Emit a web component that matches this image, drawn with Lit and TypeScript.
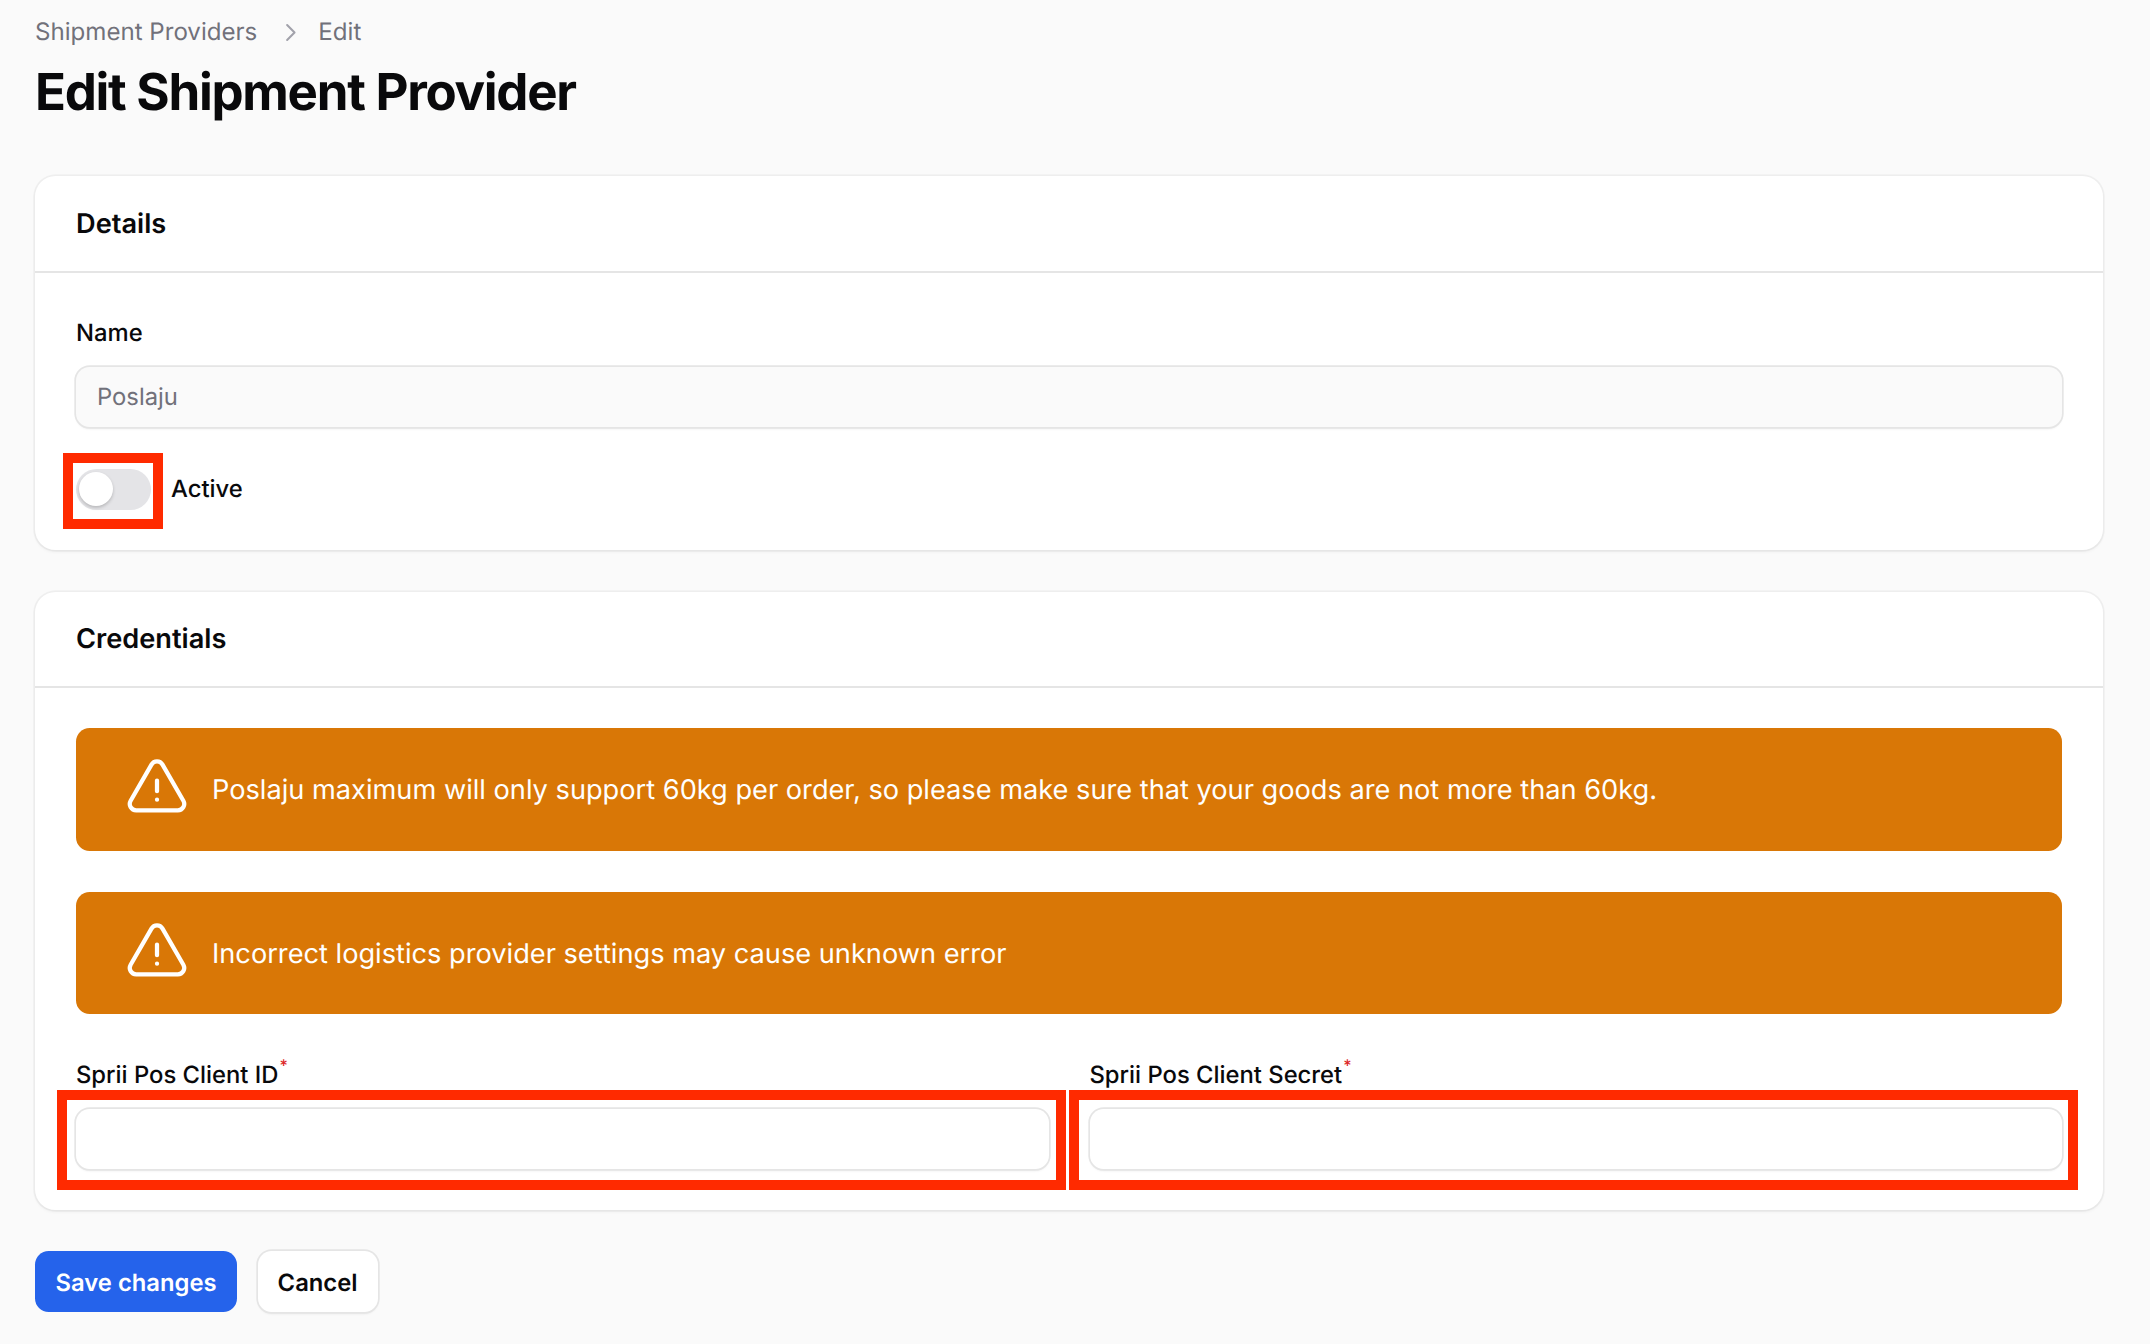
import { LitElement, html, css, svg } from "lit";
import { customElement } from "lit/decorators.js";

const warn = svg`<path d="M12 9v3.75m-9.303 3.376c-.866 1.5.217 3.374 1.948 3.374h14.71c1.73 0 2.813-1.874 1.948-3.374L13.949 3.378c-.866-1.5-3.032-1.5-3.898 0L2.697 16.126zM12 15.75h.007v.008H12v-.008z" fill="none" stroke="currentColor" stroke-width="1.5" stroke-linecap="round" stroke-linejoin="round"/>`;

@customElement("app-root")
export class AppRoot extends LitElement {
  static styles = css`
    :host {
      display: block;
      min-height: 1344px;
      background: #fafafa;
      font-family: Inter, "Liberation Sans", sans-serif;
      color: #09090b;
      font-size: 23.8px;
      line-height: 34px;
      box-sizing: border-box;
      padding: 15px 47px 0 35px;
      text-rendering: geometricPrecision;
    }
    .crumbs { display: flex; align-items: center; color: #71717a; height: 34px; font-size: 24.1px; }
    .crumbs svg { width: 27px; height: 27px; margin: 0 14px 0 20px; color: #a1a1aa; }
    h1 {
      margin: 13px 0 0;
      font-size: 51px;
      line-height: 62px;
      font-weight: 700;
      letter-spacing: -0.025em;
      color: #09090b;
    }
    .card {
      background: #fff;
      border-radius: 20.5px;
      box-shadow: 0 0 0 1.7px rgba(9, 9, 11, 0.04), 0 1.7px 3.4px rgba(0, 0, 0, 0.05);
    }
    .first { margin-top: 52px; }
    .second { margin-top: 42.3px; }
    .head {
      height: 95px;
      box-sizing: border-box;
      padding: 0 41px;
      display: flex;
      align-items: center;
      font-size: 27.2px;
      font-weight: 600;
    }
    .second .head { height: 94px; }
    .rule { height: 2px; background: #e5e5e5; }
    .body { display: flex; flex-direction: column; padding: 0 41px 41px; }
    .details-body { padding-top: 42.7px; padding-bottom: 40px; gap: 41.7px; }
    .cred-body { padding-top: 39.7px; }
    .label { font-weight: 500; display: block; }
    .field { display: flex; flex-direction: column; gap: 17px; }
    .cred-field { gap: 16.7px; padding-top: 2px; }
    .input {
      height: 60.5px;
      border-radius: 13.7px;
      box-shadow: 0 0 0 1.7px #e5e5e5, 0 1.7px 2.5px rgba(0, 0, 0, 0.08);
      background: #fff;
      padding: 0 21px;
      display: flex;
      align-items: center;
    }
    .input.disabled { background: #fafafa; color: #71717a; }
    .toggle-row { display: flex; align-items: center; gap: 20px; height: 41px; font-weight: 500; }
    .marked { position: relative; display: block; }
    .marked::after {
      content: "";
      position: absolute;
      border: 10px solid #ff2a00;
      pointer-events: none;
    }
    .toggle-mark::after { left: -13px; right: -12px; top: -16px; bottom: -19px; }
    .mark-left::after { left: -19px; right: -17.5px; top: -18.7px; bottom: -21.3px; }
    .mark-right::after { left: -20.5px; right: -16px; top: -18.7px; bottom: -21.3px; }
    .toggle {
      width: 75px;
      height: 41px;
      border-radius: 21px;
      background: #e4e4e7;
      display: flex;
      align-items: center;
      padding: 3.4px;
      box-sizing: border-box;
    }
    .thumb {
      width: 34px;
      height: 34px;
      border-radius: 50%;
      background: #fff;
      box-shadow: 0 1.7px 3.4px rgba(0, 0, 0, 0.2);
    }
    .alert {
      height: 122px;
      background: #d97706;
      border-radius: 13.7px;
      color: #fff;
      display: flex;
      align-items: center;
      padding: 0 47px;
      gap: 21px;
      font-size: 27.2px;
    }
    .alert-tall { height: 123px; margin-bottom: 41px; }
    .alert-last { margin-bottom: 42px; }
    .alert span { padding-top: 1.5px; }
    .alert svg { width: 68px; height: 68px; flex: none; }
    .grid { display: grid; grid-template-columns: 1fr 1fr; gap: 41px; }
    sup { color: #dc2626; font-size: 16px; line-height: 0; font-weight: 500; vertical-align: 12px; margin-left: 1px; }
    .actions { display: flex; gap: 20.4px; margin-top: 41.3px; align-items: center; }
    .btn {
      height: 61px;
      border-radius: 13.7px;
      padding: 1.5px 20.6px 0;
      display: flex;
      align-items: center;
      font-weight: 600;
      box-sizing: border-box;
    }
    .primary { background: #2563eb; color: #fff; }
    .ghost { background: #fff; color: #09090b; padding: 1.5px 20px 0; box-shadow: 0 0 0 1.7px #e5e5e5, 0 1.7px 2.5px rgba(0, 0, 0, 0.08); }
  `;

  render() {
    return html`
      <nav class="crumbs">
        <span>Shipment Providers</span>
        <svg viewBox="0 0 20 20"><path d="M7.5 4.5 13 10l-5.5 5.5" fill="none" stroke="currentColor" stroke-width="1.5" stroke-linecap="round" stroke-linejoin="round"/></svg>
        <span>Edit</span>
      </nav>
      <h1>Edit Shipment Provider</h1>

      <section class="card first">
        <div class="head">Details</div>
        <div class="rule"></div>
        <div class="body details-body">
          <div class="field">
            <span class="label">Name</span>
            <div class="input disabled">Poslaju</div>
          </div>
          <div class="toggle-row">
            <span class="marked toggle-mark"><div class="toggle"><div class="thumb"></div></div></span>
            <span>Active</span>
          </div>
        </div>
      </section>

      <section class="card second">
        <div class="head">Credentials</div>
        <div class="rule"></div>
        <div class="body cred-body">
          <div class="alert alert-tall">
            <svg viewBox="0 0 24 24">${warn}</svg>
            <span>Poslaju maximum will only support 60kg per order, so please make sure that your goods are not more than 60kg.</span>
          </div>
          <div class="alert alert-last">
            <svg viewBox="0 0 24 24">${warn}</svg>
            <span>Incorrect logistics provider settings may cause unknown error</span>
          </div>
          <div class="grid">
            <div class="field cred-field">
              <span class="label">Sprii Pos Client ID<sup>*</sup></span>
              <div class="marked mark-left"><div class="input"></div></div>
            </div>
            <div class="field cred-field">
              <span class="label">Sprii Pos Client Secret<sup>*</sup></span>
              <div class="marked mark-right"><div class="input"></div></div>
            </div>
          </div>
        </div>
      </section>

      <div class="actions">
        <div class="btn primary">Save changes</div>
        <div class="btn ghost">Cancel</div>
      </div>
    `;
  }
}
